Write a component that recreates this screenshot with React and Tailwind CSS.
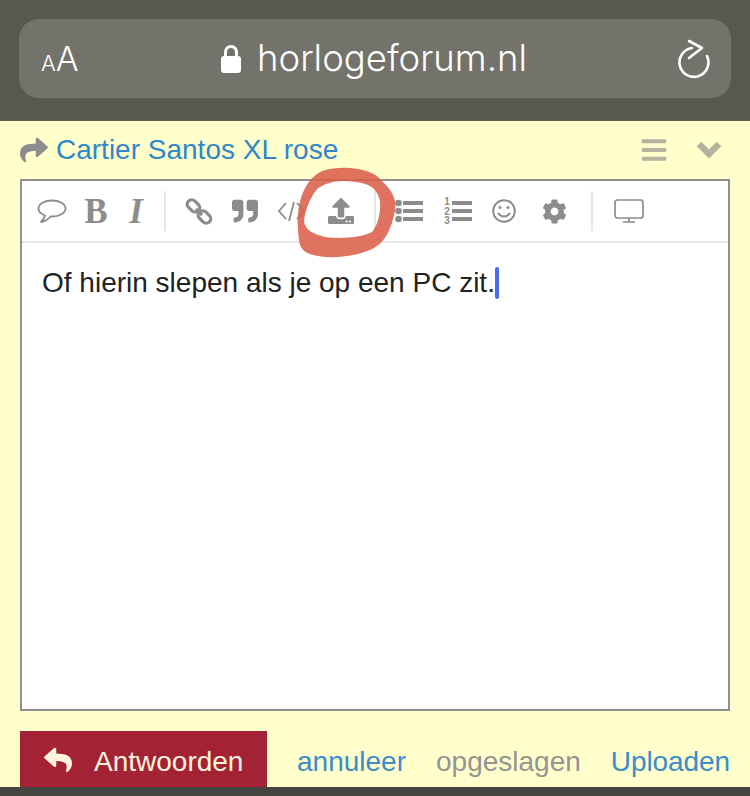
import { FaBars, FaCog, FaQuoteRight, FaReply, FaShare, FaUpload } from "react-icons/fa";

const sans = "font-['Liberation_Sans',Arial,sans-serif]";
const serif = "font-['Liberation_Serif','Times_New_Roman',serif]";

const Divider = ({ className }) => <div className={`h-10 w-0.5 bg-[#e6e6e6] ${className}`} />;

const Cell = ({ className, children }) => (
    <div className={`flex h-full items-center justify-center text-[#8c8c8c] ${className}`}>{children}</div>
);

const ListBars = () => (
    <>
        <rect x="8" y="2" width="20" height="4" />
        <rect x="8" y="10" width="20" height="4" />
        <rect x="8" y="18" width="20" height="4" />
    </>
);

const Toolbar = () => (
    <div className="flex h-[62px] shrink-0 items-center border-b-2 border-[#e8e8e8] pl-2">
        <Cell className="w-11">
            <svg width="30" height="24" viewBox="0 0 30 24" fill="none" stroke="currentColor" strokeWidth="1.8" strokeLinejoin="round">
                <path d="M8 16.5C4 15 1.500 12.500 1.500 9.500C1.500 5 7.500 1.500 15 1.500S28.500 5 28.500 9.500S22.500 17.500 15 17.500C14.500 17.500 14 17.500 13.500 17.500C11.500 20 8 22.500 4 23C6 21 7.500 19 8 16.500Z" />
            </svg>
        </Cell>
        <Cell className={`w-11 text-[35px] font-bold leading-none ${serif}`}>B</Cell>
        <Cell className={`w-9 text-[35px] font-bold italic leading-none ${serif}`}>I</Cell>
        <Divider className="ml-2.5" />
        <Cell className="ml-2.5 w-[46px]">
            <svg width="28" height="27" viewBox="0 0 28 27" fill="none" stroke="currentColor" strokeWidth="3.2">
                <rect x="-7" y="-4.500" width="14" height="9" rx="4.500" transform="translate(8.500 8) rotate(45)" />
                <rect x="-7" y="-4.500" width="14" height="9" rx="4.500" transform="translate(19.500 19) rotate(45)" />
                <path d="M11 11l6 6" />
            </svg>
        </Cell>
        <Cell className="w-[46px]"><FaQuoteRight className="text-[26px]" /></Cell>
        <Cell className="w-12">
            <svg width="28" height="22" viewBox="0 0 28 22" fill="none" stroke="currentColor" strokeWidth="1.8">
                <path d="M8 3L1 11l7 8M16 2l-5 19M19 3l7 8-7 8" />
            </svg>
        </Cell>
        <Cell className="w-[50px]"><FaUpload className="text-[26px]" /></Cell>
        <Divider className="ml-2" />
        <Cell className="ml-2.5 w-[46px]">
            <svg width="28" height="24" viewBox="0 0 28 24" fill="currentColor">
                <circle cx="3.500" cy="4" r="3.300" />
                <circle cx="3.500" cy="12" r="3.300" />
                <circle cx="3.500" cy="20" r="3.300" />
                <ListBars />
            </svg>
        </Cell>
        <Cell className="w-[52px]">
            <svg width="28" height="28" viewBox="0 0 28 28" fill="currentColor">
                <g transform="translate(0 2)"><ListBars /></g>
                <text x="3" y="8" textAnchor="middle" fontSize="10" fontWeight="700" fontFamily="Liberation Sans">1</text>
                <text x="3" y="17.500" textAnchor="middle" fontSize="10" fontWeight="700" fontFamily="Liberation Sans">2</text>
                <text x="3" y="27" textAnchor="middle" fontSize="10" fontWeight="700" fontFamily="Liberation Sans">3</text>
            </svg>
        </Cell>
        <Cell className="w-10">
            <svg width="24" height="24" viewBox="0 0 24 24" fill="none" stroke="currentColor" strokeWidth="2">
                <circle cx="12" cy="12" r="10.800" />
                <path d="M6.500 14.500c2.500 4 8.500 4 11 0" strokeLinecap="round" />
                <circle cx="8" cy="8.500" r="1.500" fill="currentColor" stroke="none" />
                <circle cx="16" cy="8.500" r="1.500" fill="currentColor" stroke="none" />
            </svg>
        </Cell>
        <Cell className="w-[60px]"><FaCog className="text-[25px]" /></Cell>
        <Divider className="ml-[7px]" />
        <Cell className="ml-3 w-12">
            <svg width="30" height="24" viewBox="0 0 30 24" fill="none" stroke="currentColor" strokeWidth="1.700">
                <rect x="1" y="1" width="28" height="18" rx="2.500" />
                <path d="M15 19v4M9 23h12" />
            </svg>
        </Cell>
    </div>
);

const App = () => {
    return (
        <div className="relative flex h-[796px] w-[750px] flex-col overflow-hidden bg-[#ffffcc]">
            {/* browser address bar */}
            <div className="flex h-[121px] shrink-0 bg-[#585850] px-[19px] pt-[19px]">
                <div className="flex h-[79px] w-full items-center rounded-[20px] bg-[#73736b] pl-[22px] pr-[19px] text-white">
                    <div className="flex w-[180px] items-baseline font-['Inter',sans-serif] font-light">
                        <span className="text-[22px]">A</span>
                        <span className="text-[34px]">A</span>
                    </div>
                    <svg className="shrink-0" width="20" height="29" viewBox="0 0 20 29" fill="none">
                        <rect y="12" width="20" height="17" rx="3" fill="currentColor" />
                        <path d="M4.500 13V8a5.500 5.500 0 0 1 11 0v5" stroke="currentColor" strokeWidth="3" />
                    </svg>
                    <span className="ml-[16px] flex-1 font-['Inter',sans-serif] text-[36.500px] font-light leading-none">horlogeforum.nl</span>
                    <svg width="36" height="40" viewBox="0 0 36 40" fill="none" stroke="currentColor" strokeWidth="2.600" strokeLinecap="round" strokeLinejoin="round">
                        <path d="M16 9A14.500 14.500 0 1 0 31 17" />
                        <path d="M13 2l13 7-13 10" />
                    </svg>
                </div>
            </div>

            {/* topic title */}
            <div className="flex h-[58px] shrink-0 items-center px-5">
                <FaShare className="text-[28px] text-[#8c8c8c]" />
                <span className={`ml-2 flex-1 text-[28px] text-[#2f86c9] ${sans}`}>Cartier Santos XL rose</span>
                <FaBars className="text-[28px] text-[#b3b3a0]" />
                <svg className="ml-[28px] mr-[8px]" width="26" height="18" viewBox="0 0 26 18" fill="none" stroke="#b3b3a0" strokeWidth="6.500">
                    <path d="M3 3l10 10L23 3" />
                </svg>
            </div>

            {/* editor */}
            <div className="mx-5 flex h-[532px] shrink-0 flex-col border-2 border-[#8f8f8f] bg-white">
                <Toolbar />
                <div className={`flex items-center px-5 pt-6 text-[28px] leading-8 text-[#222] ${sans}`}>
                    Of hierin slepen als je op een PC zit.
                    <span className="h-8 w-1 rounded-sm bg-[#4a6cf0]" />
                </div>
            </div>

            {/* footer actions */}
            <div className={`mt-5 flex h-14 shrink-0 items-center pl-5 text-[28px] ${sans}`}>
                <div className="flex h-full w-[247px] items-center bg-[#a32236] pl-6 text-[#fdf6dc]">
                    <FaReply className="mt-0.5 text-[28px]" />
                    <span className="ml-[22px] pt-[6px]">Antwoorden</span>
                </div>
                <span className="ml-[30px] pt-[6px] text-[#3b8ccb]">annuleer</span>
                <span className="ml-[30px] pt-[6px] text-[#949494]">opgeslagen</span>
                <span className="ml-[30px] pt-[6px] text-[#3b8ccb] tracking-[-0.1px]">Uploaden</span>
            </div>
            <div className="h-[9px] shrink-0 bg-[#444440]" />

            {/* hand drawn marker around the upload icon */}
            <svg className="absolute left-0 top-0 blur-[0.6px]" width="750" height="796" viewBox="0 0 750 796">
                <path
                    fill="#dc5f4a"
                    fillOpacity="0.88"
                    fillRule="evenodd"
                    d="M340 168C358 167 375 172 382 181C392 190 397 200 395 210C392 228 385 244 370 250C355 256 335 259 318 256C306 254 300 250 299 240C297 225 297 210 301 198C305 185 312 176 322 171C328 169 334 168 340 168ZM343 181C332 181 324 184 317 189C310 198 305 210 304 222C306 231 314 234 325 237C340 239 360 238 372 232C378 225 381 212 380 201C378 192 373 187 368 185C360 182 352 181 343 181Z"
                />
            </svg>
        </div>
    );
};

export default App;
